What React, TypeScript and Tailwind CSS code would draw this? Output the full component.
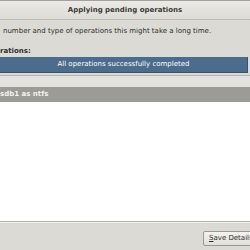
export default function App() {
  return (
    <div className="w-[250px] h-[250px] overflow-hidden flex flex-col bg-[#dcdad5] text-[7px] leading-[9px] text-[#2e2e2e] font-['DejaVu_Sans',sans-serif]">
      <div className="h-px bg-[#a3a19b]" />
      <div className="h-[19px] flex items-center justify-center bg-gradient-to-b from-[#ebeae6] to-[#dddbd6] border-b border-[#bdbbb5]">
        <span className="font-bold text-[#3a3a3a]">Applying pending operations</span>
      </div>

      <p className="mt-[7px] pl-[3px] whitespace-nowrap">
        number and type of operations this might take a long time.
      </p>
      <p className="mt-[11px] font-bold whitespace-nowrap">rations:</p>

      <div className="mt-px mr-[2px] h-[16px] flex items-center justify-center bg-[#4c6c8d] border-r border-b border-[#3a536d] text-white">
        All operations successfully completed
      </div>

      <div className="mt-[2px] flex-1 flex flex-col border-t border-[#b6b4ae]">
        <div className="h-[11px] bg-[#e3e2de]" />
        <div className="h-[15px] flex items-center bg-[#9d9b95] text-[#f4f4f2] font-bold whitespace-nowrap">
          sdb1 as ntfs
        </div>
        <div className="flex-1 bg-white" />
      </div>

      <div className="h-[29px] border-t border-[#b8b6b0] shadow-[inset_0_1px_0_#efeeea]">
        <button
          type="button"
          className="ml-[203px] mt-[9px] w-[60px] h-[15px] rounded-[2px] border border-[#9a9892] bg-gradient-to-b from-[#f3f2ef] to-[#e2e0dc] text-left pl-[5px] whitespace-nowrap"
        >
          <span className="underline">S</span>ave Details
        </button>
      </div>
    </div>
  )
}
